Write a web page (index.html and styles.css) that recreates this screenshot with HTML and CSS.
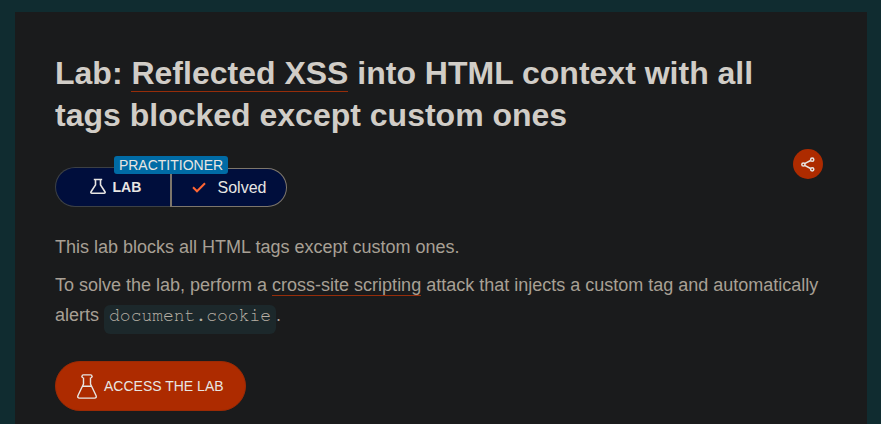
FILE: index.html
```html
<!DOCTYPE html>
<html lang="en">
<head>
<meta charset="utf-8">
<title>Lab: Reflected XSS</title>
<link rel="stylesheet" href="styles.css">
</head>
<body>
<main class="card">
  <h1>Lab: <a class="link">Reflected XSS</a> into HTML context with all tags blocked except custom ones</h1>
  <div class="meta">
    <div class="status">
      <span class="level">PRACTITIONER</span>
      <div class="kind">
        <svg width="16" height="17" viewBox="0 0 16 17" fill="none" stroke="currentColor" stroke-width="1.600" stroke-linejoin="round"><path d="M3.800 1.500h8.400M5.500 1.500v5.400L1.200 13.500q-1 1.700.8 1.700h12q1.800 0 .8-1.700L10.500 6.900V1.500"/></svg>
        <b>LAB</b>
      </div>
      <div class="solved">
        <svg width="14" height="11" viewBox="0 0 14 11" fill="none" stroke="#ff6633" stroke-width="2"><path d="M1 5.300l4 4L13 1.200"/></svg>
        <span>Solved</span>
      </div>
    </div>
    <div class="share">
      <svg width="14" height="15" viewBox="0 0 14 15" fill="none" stroke="currentColor" stroke-width="1.500"><path d="M3.600 6.700l6-3.200M3.600 8.300l6 3.200"/><circle cx="2.400" cy="7.500" r="1.600"/><circle cx="11.200" cy="2.700" r="1.600"/><circle cx="11.200" cy="12.300" r="1.600"/></svg>
    </div>
  </div>
  <p>This lab blocks all HTML tags except custom ones.</p>
  <p>To solve the lab, perform a <a class="link">cross-site scripting</a> attack that injects a custom tag and automatically alerts <code>document.cookie</code>.</p>
  <div class="access">
    <svg width="20" height="25" viewBox="0 0 20 25" fill="none" stroke="currentColor" stroke-width="1.400" stroke-linejoin="round"><path d="M6 3.600Q4.800 3.400 5 2.200 5.100.9 6.300.9h7.400q1.200 0 1.300 1.300.2 1.200-1 1.400M6.500 3.600V10L1 21.500q-1 2.600 1.500 2.600h15q2.500 0 1.500-2.600L13.500 10V3.600M5.500 12.200h9"/></svg>
    <span>ACCESS THE LAB</span>
  </div>
</main>
</body>
</html>
```
FILE: styles.css
```css
* { box-sizing: border-box; }
body {
  margin: 0;
  height: 424px;
  overflow: hidden;
  padding: 12px 14px 0 15px;
  background: #102c30;
  color: #a8a095;
  font-family: "Liberation Sans", Arial, sans-serif;
  font-size: 18px;
  line-height: 30px;
}
.card {
  height: 412px;
  padding: 40px;
  background: #1a1b1c;
}
h1 {
  margin: 0;
  color: #d1cdc7;
  font-size: 32px;
  line-height: 42px;
}
.link { border-bottom: 1px solid #962d0a; }
.meta {
  display: flex;
  justify-content: space-between;
  align-items: flex-start;
  margin-top: 13px;
  padding-right: 4px;
}
.status {
  position: relative;
  display: flex;
  width: 231.5px;
  height: 40px;
  margin-top: 18px;
  color: #e8e6e3;
}
.kind {
  display: flex;
  align-items: center;
  gap: 6.5px;
  width: 115px;
  padding: 0 0 2px 34px;
  background: #000e3c;
  border: 1px solid #3c4045;
  border-right: 0;
  border-radius: 20px 0 0 20px;
  font-size: 14px;
}
.kind b { padding-top: 2px; }
.solved {
  display: flex;
  align-items: center;
  gap: 11.5px;
  width: 116.5px;
  height: 39px;
  margin-top: 1px;
  padding-left: 20px;
  background: #000e3c;
  border: 1px solid #7d766b;
  border-left-width: 2px;
  border-radius: 0 20px 20px 0;
  font-size: 16px;
}
.level {
  position: absolute;
  left: 59px;
  top: -11px;
  width: 114px;
  height: 18px;
  border-radius: 3px;
  background: #006ba5;
  text-align: center;
  font-size: 14px;
  line-height: 18px;
}
.share {
  display: flex;
  align-items: center;
  justify-content: center;
  width: 30px;
  height: 30px;
  border-radius: 50%;
  background: #ad2b00;
  color: #e8e6e3;
}
p { margin: 8px 0 0; }
.meta + p { margin-top: 25px; }
code {
  padding: 2px 5px 9px;
  border-radius: 6px;
  background: #1c282b;
  color: #b8b0a5;
  font-family: "Courier 10 Pitch", "Nimbus Mono PS", FreeMono, "Liberation Mono", monospace;
  font-size: 18px;
}
.access {
  display: flex;
  align-items: center;
  gap: 7px;
  width: 191px;
  height: 50px;
  margin-top: 30px;
  padding: 0 0 0 21px;
  border: 1px solid #9c2a04;
  border-radius: 25px;
  background: #ad2b00;
  color: #e8e6e3;
  font-size: 14px;
}
```
